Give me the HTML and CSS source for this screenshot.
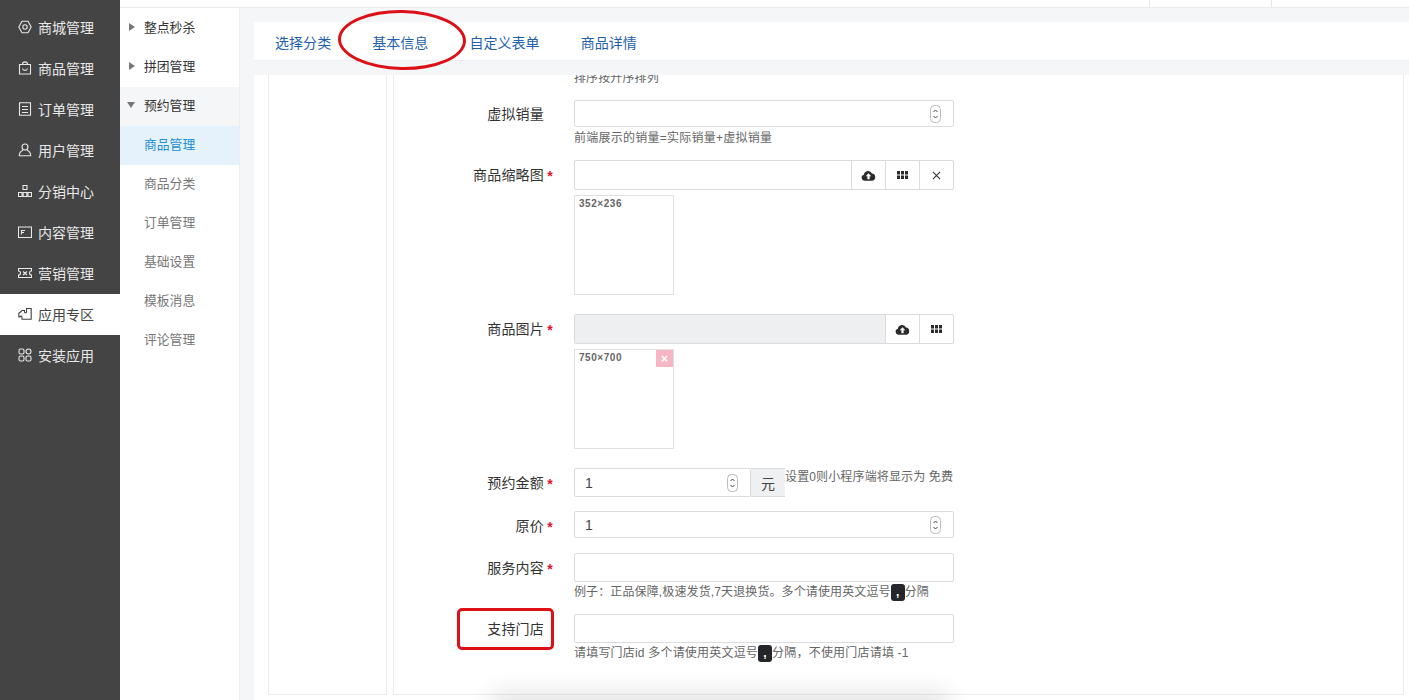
FILE: index.html
```html
<!DOCTYPE html>
<html lang="zh-CN">
<head>
<meta charset="utf-8">
<title>商品管理</title>
<link rel="stylesheet" href="styles.css">
</head>
<body>
<svg class="defs" width="0" height="0" aria-hidden="true">
  <defs>
    <symbol id="cloud" viewBox="0 0 16 12">
      <path fill="#2b2b2b" d="M3.6 11.6A3.3 3.3 0 0 1 3 5.1 4.6 4.6 0 0 1 11.8 3.9 3.9 3.9 0 0 1 12.2 11.6Z"/>
      <path fill="#fff" d="M8 3.6 11 6.9H9.2V10H6.8V6.9H5Z"/>
    </symbol>
    <symbol id="grid" viewBox="0 0 11 8">
      <path fill="#2b2b2b" d="M0 0h3v3.4H0zM4 0h3v3.4H4zM8 0h3v3.4H8zM0 4.4h3V8H0zM4 4.4h3V8H4zM8 4.4h3V8H8z"/>
    </symbol>
    <symbol id="spin" viewBox="0 0 11 18">
      <rect x=".5" y=".5" width="10" height="17" rx="4" fill="#fff" stroke="#bbb"/>
      <path fill="none" stroke="#444" d="M3.500 7 5.500 5 7.500 7M3.500 11 5.500 13 7.500 11"/>
    </symbol>
  </defs>
</svg>
<div class="app">
  <nav class="side">
    <a class="side-item"><svg class="ic" viewBox="0 0 14 14"><path d="M4 1.2h6L13.2 7 10 12.8H4L.8 7Z"/><circle cx="7" cy="7" r="2.2"/></svg>商城管理</a>
    <a class="side-item"><svg class="ic" viewBox="0 0 14 14"><path d="M1.500 3.500h11v9.500h-11ZM4.500 3.500C4.500 0 9.500 0 9.500 3.500M4.500 7.500C5 10 9 10 9.500 7.500"/></svg>商品管理</a>
    <a class="side-item"><svg class="ic" viewBox="0 0 14 14"><path d="M1.500.8h11v12.400h-11ZM4 4.500h6M4 7.500h6M4 10.500h6"/></svg>订单管理</a>
    <a class="side-item"><svg class="ic" viewBox="0 0 14 14"><circle cx="7" cy="4" r="3"/><path d="M5 7.200C3 8 1.300 9.500 1.300 12.800h11.400C12.700 9.500 11 8 9 7.200"/></svg>用户管理</a>
    <a class="side-item"><svg class="ic" viewBox="0 0 14 14"><path d="M5 1.500h4v4H5ZM.5 8.500h3.500v4H.5ZM5.200 8.500h3.600v4H5.200ZM10 8.500h3.500v4H10Z"/></svg>分销中心</a>
    <a class="side-item"><svg class="ic" viewBox="0 0 14 14"><path d="M.5 2h13v10.500H.5ZM3.500 9.500V5.500H7M3.500 7.500H6"/></svg>内容管理</a>
    <a class="side-item"><svg class="ic" viewBox="0 0 14 14"><path d="M.5 2.500h13v2.500a2 2 0 0 0 0 4v2.500H.5V9a2 2 0 0 0 0-4ZM5 5.500 9 9M9 5.500 5 9"/></svg>营销管理</a>
    <a class="side-item is-active"><svg class="ic" viewBox="0 0 14 14"><path d="M.8 6.500 4 3.500h2.500V5c0 1.200 2 1.200 2 0V1.500h4.700v10.800H4V10C4 8.800 2 8.800 2 10H.8Z"/></svg>应用专区</a>
    <a class="side-item"><svg class="ic" viewBox="0 0 14 14"><rect x="1" y="1" width="5" height="5" rx="1.500"/><rect x="8" y="1" width="5" height="5" rx="2.500"/><rect x="1" y="8" width="5" height="5" rx="1.500"/><rect x="8" y="8" width="5" height="5" rx="1.500"/></svg>安装应用</a>
  </nav>

  <div class="right">
    <header class="topbar">
      <span class="top-cell top-cell-a"></span>
      <span class="top-cell top-cell-b"></span>
    </header>
    <div class="body">
      <aside class="sub">
        <a class="sub-item sub-group"><i class="tri"></i>整点秒杀</a>
        <a class="sub-item sub-group"><i class="tri"></i>拼团管理</a>
        <a class="sub-item sub-group is-open"><i class="tri tri-down"></i>预约管理</a>
        <a class="sub-item is-current">商品管理</a>
        <a class="sub-item">商品分类</a>
        <a class="sub-item">订单管理</a>
        <a class="sub-item">基础设置</a>
        <a class="sub-item">模板消息</a>
        <a class="sub-item">评论管理</a>
      </aside>
      <main class="main">
        <div class="tabs">
          <a class="tab">选择分类</a>
          <a class="tab">基本信息</a>
          <a class="tab">自定义表单</a>
          <a class="tab">商品详情</a>
        </div>
        <section class="card">
          <div class="col col-left"></div>
          <div class="col col-form">
            <form class="form">
              <p class="hint hint-top">排序按升序排列</p>

              <div class="row gap-13">
                <div class="label label-up"><span>虚拟销量</span><b class="star"></b></div>
                <div class="field">
                  <div class="input h27 num"><svg class="spin"><use href="#spin"/></svg></div>
                  <p class="hint hint-2">前端展示的销量=实际销量+虚拟销量</p>
                </div>
              </div>

              <div class="row gap-13">
                <div class="label"><span>商品缩略图</span><b class="star">*</b></div>
                <div class="field">
                  <div class="group">
                    <div class="group-main"></div>
                    <span class="gbtn"><svg class="i-cloud"><use href="#cloud"/></svg></span>
                    <span class="gbtn"><svg class="i-grid"><use href="#grid"/></svg></span>
                    <span class="gbtn"><svg class="i-x" viewBox="0 0 10 10"><path d="M1 1 9 9M9 1 1 9"/></svg></span>
                  </div>
                  <div class="thumb">352×236</div>
                </div>
              </div>

              <div class="row gap-19">
                <div class="label"><span>商品图片</span><b class="star">*</b></div>
                <div class="field">
                  <div class="group">
                    <div class="group-main is-off"></div>
                    <span class="gbtn"><svg class="i-cloud"><use href="#cloud"/></svg></span>
                    <span class="gbtn"><svg class="i-grid"><use href="#grid"/></svg></span>
                  </div>
                  <div class="thumb">750×700<span class="del">×</span></div>
                </div>
              </div>

              <div class="row gap-19">
                <div class="label"><span>预约金额</span><b class="star">*</b></div>
                <div class="field field-inline">
                  <div class="input h29 num num-price">1<svg class="spin"><use href="#spin"/></svg></div>
                  <span class="addon">元</span>
                  <span class="hint hint-side">设置0则小程序端将显示为 免费</span>
                </div>
              </div>

              <div class="row">
                <div class="label"><span>原价</span><b class="star">*</b></div>
                <div class="field">
                  <div class="input h27 num">1<svg class="spin"><use href="#spin"/></svg></div>
                </div>
              </div>

              <div class="row gap-15">
                <div class="label"><span>服务内容</span><b class="star">*</b></div>
                <div class="field">
                  <div class="input h29"></div>
                  <p class="hint">例子：正品保障,极速发货,7天退换货。多个请使用英文逗号<code class="kbd">,</code>分隔</p>
                </div>
              </div>

              <div class="row gap-13">
                <div class="label label-mark"><span>支持门店</span><b class="star"></b></div>
                <div class="field">
                  <div class="input h29"></div>
                  <p class="hint hint-3">请填写门店id 多个请使用英文逗号<code class="kbd">,</code>分隔，不使用门店请填 -1</p>
                </div>
              </div>
            </form>
          </div>
        </section>
      </main>
    </div>
  </div>
  <div class="ring"></div>
  <div class="floatbar"></div>
</div>
</body>
</html>
```
FILE: styles.css
```css
*, *::after { box-sizing: border-box; }
html, body { margin: 0; height: 100%; overflow: hidden; }
body {
  font-family: "Liberation Sans", "Noto Sans CJK SC", sans-serif;
  font-size: 14px;
  color: #333;
  background: #f5f6f8;
}
.defs { position: absolute; }
p { margin: 0; }

.app { position: relative; display: flex; width: 1409px; height: 700px; overflow: hidden; }

.side { flex: 0 0 120px; background: #444; padding-top: 7px; }
.side-item {
  display: flex; align-items: center; height: 41px; padding: 0 0 2px 18px;
  color: #e8e8e8; font-size: 14px; gap: 6px;
}
.side-item.is-active { background: #fff; color: #444; }
.ic {
  width: 14px; height: 14px; flex: none;
  fill: none; stroke: currentColor; stroke-width: 1.100;
}

.right { flex: 1; min-width: 0; display: flex; flex-direction: column; }
.topbar {
  height: 8px; background: #fff; border-bottom: 1px solid #e9eaec;
  display: flex; justify-content: flex-end; flex: none;
}
.top-cell { border-left: 1px solid #e6e6e6; }
.top-cell-a { width: 122px; }
.top-cell-b { width: 138px; }

.body { flex: 1; min-height: 0; display: flex; }

.sub {
  flex: 0 0 120px; background: #fff; border-right: 1px solid #eee; padding-top: 1px;
}
.sub-item {
  display: flex; align-items: center; height: 39px; padding: 0 0 5px 24px;
  font-size: 12.800px; color: #777; position: relative;
}
.sub-group { color: #333; }
.sub-group.is-open { background: #f5f6f8; }
.sub-item.is-current { background: #e6f2fb; color: #1c8fd6; }
.tri {
  position: absolute; left: 9px; top: 14px;
  border-left: 6px solid #777; border-top: 4px solid transparent; border-bottom: 4px solid transparent;
}
.tri-down {
  left: 7px; top: 15px;
  border-top: 6px solid #777; border-left: 4px solid transparent; border-right: 4px solid transparent; border-bottom: 0;
}

.main { flex: 1; min-width: 0; padding: 14px 0 0 14px; display: flex; flex-direction: column; }
.tabs {
  flex: none; height: 39px; background: #fff; display: flex; align-items: center;
  padding: 1px 0 0 21px; gap: 41px; border-bottom: 1px solid #eeeff1;
}
.tab { color: #1f5fae; font-size: 14px; letter-spacing: .05px; }

.card {
  flex: 1; min-height: 0; margin-top: 14px; background: #fff;
  padding: 0 5px 5px 14px; display: flex; gap: 6px;
}
.col { border: 1px solid #ececec; border-top: 0; overflow: hidden; }
.col-left { flex: 0 0 119px; }
.col-form { flex: 1; min-width: 0; }

.form { margin-top: -5px; }
.row { display: flex; margin-top: 14px; }
.gap-13 { margin-top: 13px; }
.gap-15 { margin-top: 15px; }
.gap-19 { margin-top: 19px; }

.label {
  flex: 0 0 160px; height: 27px; display: flex; justify-content: flex-end; align-items: center;
  font-size: 14px; color: #333; letter-spacing: .2px;
}
.label-up { padding-bottom: 2px; }
.star {
  width: 10px; flex: none; color: #e5122d; font-size: 14px; font-weight: 700;
  text-align: right; line-height: 1; padding: 5px 1px 0 0;
}
.label-mark { position: relative; }
.label-mark::after {
  content: ""; position: absolute; left: 63px; top: -6px; width: 97px; height: 42px;
  border: 3px solid #dd1018; border-radius: 5px;
}

.field { width: 380px; margin-left: 20px; flex: none; }
.field-inline { display: flex; align-items: flex-start; }

.input {
  border: 1px solid #d9dbde; border-radius: 2px; background: #fff; width: 100%;
  display: flex; align-items: center; padding: 0 10px; color: #444; font-size: 14px;
}
.h27 { height: 27px; }
.h29 { height: 29px; }
.num { justify-content: space-between; }
.num-price { flex: 0 0 177px; width: 177px; }
.num .spin { margin-left: auto; margin-right: 2px; }
.spin { width: 11px; height: 18px; flex: none; }

.addon {
  flex: 0 0 34px; height: 29px; background: #eef0f2; border-bottom: 1px solid #d9dbde; border-top: 1px solid #d9dbde;
  display: flex; align-items: center; justify-content: center; color: #444; font-size: 14px;
}

.hint { font-size: 12px; line-height: 17px; color: #666; white-space: nowrap; margin-top: 2px; letter-spacing: .12px; }
.hint-top { margin: 0 0 0 180px; }
.hint-2 { margin-top: 3px; letter-spacing: .25px; }
.hint-3 { letter-spacing: .2px; }
.hint-side { margin-top: 0; line-height: 18px; letter-spacing: .14px; }

.kbd {
  display: inline-block; width: 14px; height: 17px; background: #24262b; border-radius: 3px;
  color: #fff; font: 700 12px/17px "Liberation Sans", sans-serif; text-align: center; vertical-align: top;
}

.group { display: flex; height: 30px; border: 1px solid #d9dbde; border-radius: 2px; background: #fff; }
.group-main { flex: 1; }
.group-main.is-off { background: #eeeff1; }
.gbtn {
  flex: 0 0 34px; display: flex; align-items: center; justify-content: center;
  border-left: 1px solid #d9dbde;
}
.i-cloud { width: 15px; height: 11px; }
.i-grid { width: 11px; height: 8px; }
.i-x { width: 9px; height: 9px; fill: none; stroke: #333; stroke-width: 1.200; }

.thumb {
  position: relative; margin-top: 5px; width: 100px; height: 100px; border: 1px solid #e0e0e0;
  padding: 2px 4px; font-size: 10px; font-weight: 700; line-height: 12px; color: #666; letter-spacing: .55px;
}
.del {
  position: absolute; right: 0; top: 0; width: 17px; height: 17px; background: #f7b6c6;
  color: #fff; font-size: 12px; line-height: 18px; text-align: center; letter-spacing: 0;
}

.ring {
  position: absolute; left: 338px; top: 10px; width: 128px; height: 60px;
  border: 3px solid #dd1018; border-radius: 50%; transform: rotate(1deg);
}
.floatbar {
  position: absolute; left: 500px; top: 702px; width: 440px; height: 40px;
  box-shadow: 0 0 26px 8px rgba(0, 0, 0, .12);
}
```
